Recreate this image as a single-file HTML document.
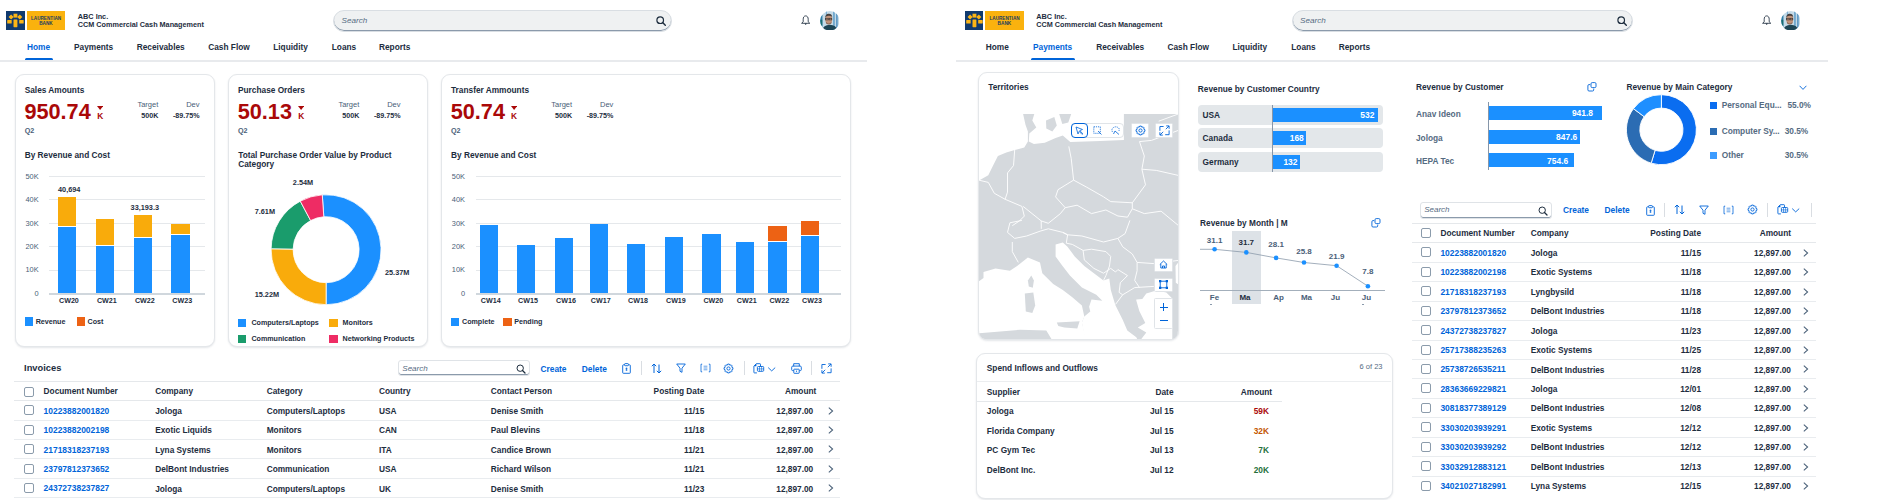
<!DOCTYPE html>
<html><head><meta charset="utf-8"><style>
html,body{margin:0;padding:0;width:1880px;height:500px;overflow:hidden;background:#fff;}
body{position:relative;font-family:"Liberation Sans", sans-serif;}
.t{position:absolute;white-space:nowrap;}
.b{position:absolute;}
</style></head><body>
<div class="b" style="left:6px;top:11.3px;width:18.9px;height:18.6px;background:#103a6e;"></div>
<div class="b" style="left:26.8px;top:11.3px;width:38.3px;height:18.6px;background:#fab20e;"></div>
<svg class="b" style="left:6px;top:11.3px" width="18.9" height="18.6" viewBox="0 0 18.9 18.6">
<g fill="#fbb516"><rect x="7.5" y="2.7" width="3.9" height="3.9"/><rect x="7.5" y="8.5" width="3.9" height="7.7" rx="0.6"/><rect x="3.3" y="4.2" width="3.6" height="3.6" transform="rotate(45 5.1 6)"/><rect x="12" y="4.2" width="3.6" height="3.6" transform="rotate(45 13.8 6)"/><rect x="1.2" y="9" width="4.5" height="3.6" rx="0.6"/><rect x="13.2" y="9" width="4.5" height="3.6" rx="0.6"/></g></svg>
<div class="t" style="top:16.56px;font-size:4.65px;line-height:4.65px;color:#203b63;font-weight:bold;left:-253.95px;width:600px;text-align:center;">LAURENTIAN</div>
<div class="t" style="top:22.02px;font-size:4.7px;line-height:4.7px;color:#203b63;font-weight:bold;left:-254.1px;width:600px;text-align:center;">BANK</div>
<div class="t" style="top:12.92px;font-size:7.3px;line-height:7.3px;color:#1d2d3e;font-weight:bold;left:77.8px;">ABC Inc.</div>
<div class="t" style="top:21.26px;font-size:7.25px;line-height:7.25px;color:#1d2d3e;font-weight:bold;left:77.8px;">CCM Commercial Cash Management</div>
<div class="b" style="left:333.1px;top:9.5px;width:339px;height:22.1px;background:#eff1f2;border:1px solid #d9dee3;box-shadow:inset 0 -1px 0 #8b9aab;border-radius:11px;box-sizing:border-box;"></div>
<div class="t" style="top:16.94px;font-size:8.1px;line-height:8.1px;color:#556b82;font-weight:normal;font-style:italic;left:341.6px;">Search</div>
<svg class="b" style="left:656.1px;top:15.6px" width="10" height="10" viewBox="0 0 10 10"><circle cx="4.2" cy="4.2" r="3.3" fill="none" stroke="#1d2d3e" stroke-width="1.2"/><path d="M6.6 6.6 L9.3 9.3" stroke="#1d2d3e" stroke-width="1.4" stroke-linecap="round"/></svg>
<svg class="b" style="left:801px;top:15.2px" width="9.4" height="10.4" viewBox="0 0 9.4 10.4"><path d="M4.7 0.9 C2.9 0.9 2.2 2.5 2.2 4.2 L2.2 6.8 L0.6 8.3 L8.8 8.3 L7.2 6.8 L7.2 4.2 C7.2 2.5 6.5 0.9 4.7 0.9 Z" fill="none" stroke="#1d2d3e" stroke-width="0.85" stroke-linejoin="round"/><path d="M3.5 8.6 L5.9 8.6 L4.7 10.1 Z" fill="#1d2d3e"/></svg>
<svg class="b" style="left:819.8px;top:10.9px" width="19.6" height="19.6" viewBox="0 0 20 20"><defs><clipPath id="av0"><circle cx="10" cy="10" r="9.9"/></clipPath></defs><g clip-path="url(#av0)"><rect width="20" height="20" fill="#c5dbe8"/><rect x="0" y="4" width="2.5" height="16" fill="#2f7fa8"/><rect x="0.5" y="9" width="1.8" height="6" fill="#1b6f70"/><rect x="13.5" y="0" width="1.5" height="20" fill="#5d9cc7"/><rect x="16.5" y="0" width="1.5" height="20" fill="#4f8fbf"/><rect x="6" y="0" width="1.2" height="6" fill="#7fb0d4"/><path d="M2 20 Q3 14.5 10 14 Q17 14.5 18 20 Z" fill="#1e4656"/><ellipse cx="8.9" cy="8.8" rx="3.5" ry="4.6" fill="#c2937a"/><path d="M5.3 7.5 Q5.2 2.8 9 2.9 Q12.6 3 12.5 7 L11.6 5.4 Q9 4.3 6.2 5.6 Z" fill="#4a423e"/><rect x="5.6" y="7.4" width="2.8" height="1.7" fill="none" stroke="#2a2a2a" stroke-width="0.6"/><rect x="9.3" y="7.4" width="2.8" height="1.7" fill="none" stroke="#2a2a2a" stroke-width="0.6"/><path d="M6 11 Q8.9 14.5 11.8 11 L11.6 12.8 Q8.9 15 6.2 12.8 Z" fill="#8a6a5a"/></g></svg>
<div class="t" style="top:42.97px;font-size:8.3px;line-height:8.3px;color:#0064d9;font-weight:bold;left:27px;">Home</div>
<div class="t" style="top:42.97px;font-size:8.3px;line-height:8.3px;color:#1d2d3e;font-weight:bold;left:74px;">Payments</div>
<div class="t" style="top:42.97px;font-size:8.3px;line-height:8.3px;color:#1d2d3e;font-weight:bold;left:136.75px;">Receivables</div>
<div class="t" style="top:42.97px;font-size:8.3px;line-height:8.3px;color:#1d2d3e;font-weight:bold;left:208.25px;">Cash Flow</div>
<div class="t" style="top:42.97px;font-size:8.3px;line-height:8.3px;color:#1d2d3e;font-weight:bold;left:273.25px;">Liquidity</div>
<div class="t" style="top:42.97px;font-size:8.3px;line-height:8.3px;color:#1d2d3e;font-weight:bold;left:331.75px;">Loans</div>
<div class="t" style="top:42.97px;font-size:8.3px;line-height:8.3px;color:#1d2d3e;font-weight:bold;left:379px;">Reports</div>
<div class="b" style="left:0px;top:59.6px;width:867px;height:2px;background:#e8eaed;"></div>
<div class="b" style="left:25.25px;top:58px;width:27.25px;height:2.4px;background:#0064d9;border-radius:1.5px 1.5px 0 0;"></div>
<div class="b" style="left:964.5px;top:11.3px;width:18.9px;height:18.6px;background:#103a6e;"></div>
<div class="b" style="left:985.3px;top:11.3px;width:38.3px;height:18.6px;background:#fab20e;"></div>
<svg class="b" style="left:964.5px;top:11.3px" width="18.9" height="18.6" viewBox="0 0 18.9 18.6">
<g fill="#fbb516"><rect x="7.5" y="2.7" width="3.9" height="3.9"/><rect x="7.5" y="8.5" width="3.9" height="7.7" rx="0.6"/><rect x="3.3" y="4.2" width="3.6" height="3.6" transform="rotate(45 5.1 6)"/><rect x="12" y="4.2" width="3.6" height="3.6" transform="rotate(45 13.8 6)"/><rect x="1.2" y="9" width="4.5" height="3.6" rx="0.6"/><rect x="13.2" y="9" width="4.5" height="3.6" rx="0.6"/></g></svg>
<div class="t" style="top:16.56px;font-size:4.65px;line-height:4.65px;color:#203b63;font-weight:bold;left:704.55px;width:600px;text-align:center;">LAURENTIAN</div>
<div class="t" style="top:22.02px;font-size:4.7px;line-height:4.7px;color:#203b63;font-weight:bold;left:704.4px;width:600px;text-align:center;">BANK</div>
<div class="t" style="top:12.92px;font-size:7.3px;line-height:7.3px;color:#1d2d3e;font-weight:bold;left:1036.3px;">ABC Inc.</div>
<div class="t" style="top:21.26px;font-size:7.25px;line-height:7.25px;color:#1d2d3e;font-weight:bold;left:1036.3px;">CCM Commercial Cash Management</div>
<div class="b" style="left:1291.6px;top:9.5px;width:341.6px;height:22.1px;background:#eff1f2;border:1px solid #d9dee3;box-shadow:inset 0 -1px 0 #8b9aab;border-radius:11px;box-sizing:border-box;"></div>
<div class="t" style="top:16.94px;font-size:8.1px;line-height:8.1px;color:#556b82;font-weight:normal;font-style:italic;left:1300.1px;">Search</div>
<svg class="b" style="left:1617.2px;top:15.6px" width="10" height="10" viewBox="0 0 10 10"><circle cx="4.2" cy="4.2" r="3.3" fill="none" stroke="#1d2d3e" stroke-width="1.2"/><path d="M6.6 6.6 L9.3 9.3" stroke="#1d2d3e" stroke-width="1.4" stroke-linecap="round"/></svg>
<svg class="b" style="left:1761.8px;top:15.2px" width="9.4" height="10.4" viewBox="0 0 9.4 10.4"><path d="M4.7 0.9 C2.9 0.9 2.2 2.5 2.2 4.2 L2.2 6.8 L0.6 8.3 L8.8 8.3 L7.2 6.8 L7.2 4.2 C7.2 2.5 6.5 0.9 4.7 0.9 Z" fill="none" stroke="#1d2d3e" stroke-width="0.85" stroke-linejoin="round"/><path d="M3.5 8.6 L5.9 8.6 L4.7 10.1 Z" fill="#1d2d3e"/></svg>
<svg class="b" style="left:1780.8px;top:10.9px" width="19.6" height="19.6" viewBox="0 0 20 20"><defs><clipPath id="av958"><circle cx="10" cy="10" r="9.9"/></clipPath></defs><g clip-path="url(#av958)"><rect width="20" height="20" fill="#c5dbe8"/><rect x="0" y="4" width="2.5" height="16" fill="#2f7fa8"/><rect x="0.5" y="9" width="1.8" height="6" fill="#1b6f70"/><rect x="13.5" y="0" width="1.5" height="20" fill="#5d9cc7"/><rect x="16.5" y="0" width="1.5" height="20" fill="#4f8fbf"/><rect x="6" y="0" width="1.2" height="6" fill="#7fb0d4"/><path d="M2 20 Q3 14.5 10 14 Q17 14.5 18 20 Z" fill="#1e4656"/><ellipse cx="8.9" cy="8.8" rx="3.5" ry="4.6" fill="#c2937a"/><path d="M5.3 7.5 Q5.2 2.8 9 2.9 Q12.6 3 12.5 7 L11.6 5.4 Q9 4.3 6.2 5.6 Z" fill="#4a423e"/><rect x="5.6" y="7.4" width="2.8" height="1.7" fill="none" stroke="#2a2a2a" stroke-width="0.6"/><rect x="9.3" y="7.4" width="2.8" height="1.7" fill="none" stroke="#2a2a2a" stroke-width="0.6"/><path d="M6 11 Q8.9 14.5 11.8 11 L11.6 12.8 Q8.9 15 6.2 12.8 Z" fill="#8a6a5a"/></g></svg>
<div class="t" style="top:42.97px;font-size:8.3px;line-height:8.3px;color:#1d2d3e;font-weight:bold;left:985.75px;">Home</div>
<div class="t" style="top:42.97px;font-size:8.3px;line-height:8.3px;color:#0064d9;font-weight:bold;left:1033px;">Payments</div>
<div class="t" style="top:42.97px;font-size:8.3px;line-height:8.3px;color:#1d2d3e;font-weight:bold;left:1096.25px;">Receivables</div>
<div class="t" style="top:42.97px;font-size:8.3px;line-height:8.3px;color:#1d2d3e;font-weight:bold;left:1167.5px;">Cash Flow</div>
<div class="t" style="top:42.97px;font-size:8.3px;line-height:8.3px;color:#1d2d3e;font-weight:bold;left:1232.5px;">Liquidity</div>
<div class="t" style="top:42.97px;font-size:8.3px;line-height:8.3px;color:#1d2d3e;font-weight:bold;left:1291.25px;">Loans</div>
<div class="t" style="top:42.97px;font-size:8.3px;line-height:8.3px;color:#1d2d3e;font-weight:bold;left:1338.75px;">Reports</div>
<div class="b" style="left:956px;top:59.6px;width:871.5px;height:2px;background:#e8eaed;"></div>
<div class="b" style="left:1030.75px;top:58px;width:44px;height:2.4px;background:#0064d9;border-radius:1.5px 1.5px 0 0;"></div>
<div class="b" style="left:14.5px;top:74.2px;width:200.3px;height:273px;background:#fff;border:1px solid #e4e7ea;border-radius:9px;box-sizing:border-box;box-shadow:0 1px 2px rgba(34,53,72,0.12);background:#fff;"></div>
<div class="b" style="left:227.6px;top:74.2px;width:200px;height:273px;background:#fff;border:1px solid #e4e7ea;border-radius:9px;box-sizing:border-box;box-shadow:0 1px 2px rgba(34,53,72,0.12);background:#fff;"></div>
<div class="b" style="left:440.5px;top:74.2px;width:410.3px;height:273px;background:#fff;border:1px solid #e4e7ea;border-radius:9px;box-sizing:border-box;box-shadow:0 1px 2px rgba(34,53,72,0.12);background:#fff;"></div>
<div class="t" style="top:85.67px;font-size:8.3px;line-height:8.3px;color:#1d2d3e;font-weight:bold;left:24.7px;">Sales Amounts</div>
<div class="t" style="top:101.33px;font-size:21.7px;line-height:21.7px;color:#aa0808;font-weight:bold;left:24.4px;">950.74</div>
<svg class="b" style="left:97.3px;top:105.6px" width="6" height="4"><path d="M0 0 L6.2 0 L3.1 4 Z" fill="#aa0808"/></svg>
<div class="t" style="top:112.49px;font-size:8.4px;line-height:8.4px;color:#aa0808;font-weight:bold;left:97.2px;">K</div>
<div class="t" style="top:101.45px;font-size:7.5px;line-height:7.5px;color:#4a6078;font-weight:normal;right:1721.7px;text-align:right;">Target</div>
<div class="t" style="top:112.55px;font-size:7.15px;line-height:7.15px;color:#1d2d3e;font-weight:bold;right:1721.7px;text-align:right;">500K</div>
<div class="t" style="top:101.45px;font-size:7.5px;line-height:7.5px;color:#4a6078;font-weight:normal;right:1680.5px;text-align:right;">Dev</div>
<div class="t" style="top:112.55px;font-size:7.15px;line-height:7.15px;color:#1d2d3e;font-weight:bold;right:1680.5px;text-align:right;">-89.75%</div>
<div class="t" style="top:127.21px;font-size:7.2px;line-height:7.2px;color:#4a6078;font-weight:bold;left:24.7px;">Q2</div>
<div class="t" style="top:85.67px;font-size:8.3px;line-height:8.3px;color:#1d2d3e;font-weight:bold;left:238px;">Purchase Orders</div>
<div class="t" style="top:101.33px;font-size:21.7px;line-height:21.7px;color:#aa0808;font-weight:bold;left:237.7px;">50.13</div>
<svg class="b" style="left:298.3px;top:105.6px" width="6" height="4"><path d="M0 0 L6.2 0 L3.1 4 Z" fill="#aa0808"/></svg>
<div class="t" style="top:112.49px;font-size:8.4px;line-height:8.4px;color:#aa0808;font-weight:bold;left:298.2px;">K</div>
<div class="t" style="top:101.45px;font-size:7.5px;line-height:7.5px;color:#4a6078;font-weight:normal;right:1520.7px;text-align:right;">Target</div>
<div class="t" style="top:112.55px;font-size:7.15px;line-height:7.15px;color:#1d2d3e;font-weight:bold;right:1520.7px;text-align:right;">500K</div>
<div class="t" style="top:101.45px;font-size:7.5px;line-height:7.5px;color:#4a6078;font-weight:normal;right:1479.5px;text-align:right;">Dev</div>
<div class="t" style="top:112.55px;font-size:7.15px;line-height:7.15px;color:#1d2d3e;font-weight:bold;right:1479.5px;text-align:right;">-89.75%</div>
<div class="t" style="top:127.21px;font-size:7.2px;line-height:7.2px;color:#4a6078;font-weight:bold;left:238px;">Q2</div>
<div class="t" style="top:85.67px;font-size:8.3px;line-height:8.3px;color:#1d2d3e;font-weight:bold;left:451px;">Transfer Ammounts</div>
<div class="t" style="top:101.33px;font-size:21.7px;line-height:21.7px;color:#aa0808;font-weight:bold;left:450.7px;">50.74</div>
<svg class="b" style="left:511.1px;top:105.6px" width="6" height="4"><path d="M0 0 L6.2 0 L3.1 4 Z" fill="#aa0808"/></svg>
<div class="t" style="top:112.49px;font-size:8.4px;line-height:8.4px;color:#aa0808;font-weight:bold;left:511px;">K</div>
<div class="t" style="top:101.45px;font-size:7.5px;line-height:7.5px;color:#4a6078;font-weight:normal;right:1307.9px;text-align:right;">Target</div>
<div class="t" style="top:112.55px;font-size:7.15px;line-height:7.15px;color:#1d2d3e;font-weight:bold;right:1307.9px;text-align:right;">500K</div>
<div class="t" style="top:101.45px;font-size:7.5px;line-height:7.5px;color:#4a6078;font-weight:normal;right:1266.7px;text-align:right;">Dev</div>
<div class="t" style="top:112.55px;font-size:7.15px;line-height:7.15px;color:#1d2d3e;font-weight:bold;right:1266.7px;text-align:right;">-89.75%</div>
<div class="t" style="top:127.21px;font-size:7.2px;line-height:7.2px;color:#4a6078;font-weight:bold;left:451px;">Q2</div>
<div class="t" style="top:150.57px;font-size:8.3px;line-height:8.3px;color:#1d2d3e;font-weight:bold;left:24.7px;">By Revenue and Cost</div>
<div class="b" style="left:49px;top:175.8px;width:155.6px;height:1px;background:#e5e8eb;"></div>
<div class="t" style="top:172.64px;font-size:7.4px;line-height:7.4px;color:#4a6078;font-weight:normal;right:1841.4px;text-align:right;">50K</div>
<div class="b" style="left:49px;top:199.3px;width:155.6px;height:1px;background:#e5e8eb;"></div>
<div class="t" style="top:196.14px;font-size:7.4px;line-height:7.4px;color:#4a6078;font-weight:normal;right:1841.4px;text-align:right;">40K</div>
<div class="b" style="left:49px;top:222.8px;width:155.6px;height:1px;background:#e5e8eb;"></div>
<div class="t" style="top:219.64px;font-size:7.4px;line-height:7.4px;color:#4a6078;font-weight:normal;right:1841.4px;text-align:right;">30K</div>
<div class="b" style="left:49px;top:246.2px;width:155.6px;height:1px;background:#e5e8eb;"></div>
<div class="t" style="top:243.04px;font-size:7.4px;line-height:7.4px;color:#4a6078;font-weight:normal;right:1841.4px;text-align:right;">20K</div>
<div class="b" style="left:49px;top:269.6px;width:155.6px;height:1px;background:#e5e8eb;"></div>
<div class="t" style="top:266.44px;font-size:7.4px;line-height:7.4px;color:#4a6078;font-weight:normal;right:1841.4px;text-align:right;">10K</div>
<div class="b" style="left:49px;top:293px;width:155.6px;height:1.6px;background:#d0d7dd;"></div>
<div class="t" style="top:289.94px;font-size:7.4px;line-height:7.4px;color:#4a6078;font-weight:normal;right:1841.4px;text-align:right;">0</div>
<div class="b" style="left:57.9px;top:197.2px;width:18.4px;height:29px;background:#f9ab0b;"></div>
<div class="b" style="left:57.9px;top:226.8px;width:18.4px;height:66.4px;background:#1b90ff;"></div>
<div class="t" style="top:298.25px;font-size:7.15px;line-height:7.15px;color:#1d2d3e;font-weight:bold;left:-231.1px;width:600px;text-align:center;">CW20</div>
<div class="b" style="left:95.8px;top:218.7px;width:18.4px;height:26.2px;background:#f9ab0b;"></div>
<div class="b" style="left:95.8px;top:245.5px;width:18.4px;height:47.7px;background:#1b90ff;"></div>
<div class="t" style="top:298.25px;font-size:7.15px;line-height:7.15px;color:#1d2d3e;font-weight:bold;left:-193.2px;width:600px;text-align:center;">CW21</div>
<div class="b" style="left:133.8px;top:215.4px;width:18.4px;height:21.8px;background:#f9ab0b;"></div>
<div class="b" style="left:133.8px;top:237.8px;width:18.4px;height:55.4px;background:#1b90ff;"></div>
<div class="t" style="top:298.25px;font-size:7.15px;line-height:7.15px;color:#1d2d3e;font-weight:bold;left:-155.2px;width:600px;text-align:center;">CW22</div>
<div class="b" style="left:171.2px;top:223.8px;width:18.4px;height:10.7px;background:#f9ab0b;"></div>
<div class="b" style="left:171.2px;top:235.1px;width:18.4px;height:58.1px;background:#1b90ff;"></div>
<div class="t" style="top:298.25px;font-size:7.15px;line-height:7.15px;color:#1d2d3e;font-weight:bold;left:-117.8px;width:600px;text-align:center;">CW23</div>
<div class="t" style="top:185.82px;font-size:7.3px;line-height:7.3px;color:#1d2d3e;font-weight:bold;left:-230.8px;width:600px;text-align:center;">40,694</div>
<div class="t" style="top:204.22px;font-size:7.3px;line-height:7.3px;color:#1d2d3e;font-weight:bold;left:-155.2px;width:600px;text-align:center;">33,193.3</div>
<div class="b" style="left:24.7px;top:317.4px;width:8.2px;height:8.4px;background:#1b90ff;"></div>
<div class="t" style="top:318.55px;font-size:7.15px;line-height:7.15px;color:#1d2d3e;font-weight:bold;left:35.7px;">Revenue</div>
<div class="b" style="left:76.8px;top:317.4px;width:8.2px;height:8.4px;background:#ed6214;"></div>
<div class="t" style="top:318.55px;font-size:7.15px;line-height:7.15px;color:#1d2d3e;font-weight:bold;left:87.6px;">Cost</div>
<div class="t" style="top:150.57px;font-size:8.3px;line-height:8.3px;color:#1d2d3e;font-weight:bold;left:451px;">By Revenue and Cost</div>
<div class="b" style="left:475.7px;top:175.8px;width:365px;height:1px;background:#e5e8eb;"></div>
<div class="t" style="top:172.64px;font-size:7.4px;line-height:7.4px;color:#4a6078;font-weight:normal;right:1415px;text-align:right;">50K</div>
<div class="b" style="left:475.7px;top:199.3px;width:365px;height:1px;background:#e5e8eb;"></div>
<div class="t" style="top:196.14px;font-size:7.4px;line-height:7.4px;color:#4a6078;font-weight:normal;right:1415px;text-align:right;">40K</div>
<div class="b" style="left:475.7px;top:222.8px;width:365px;height:1px;background:#e5e8eb;"></div>
<div class="t" style="top:219.64px;font-size:7.4px;line-height:7.4px;color:#4a6078;font-weight:normal;right:1415px;text-align:right;">30K</div>
<div class="b" style="left:475.7px;top:246.2px;width:365px;height:1px;background:#e5e8eb;"></div>
<div class="t" style="top:243.04px;font-size:7.4px;line-height:7.4px;color:#4a6078;font-weight:normal;right:1415px;text-align:right;">20K</div>
<div class="b" style="left:475.7px;top:269.6px;width:365px;height:1px;background:#e5e8eb;"></div>
<div class="t" style="top:266.44px;font-size:7.4px;line-height:7.4px;color:#4a6078;font-weight:normal;right:1415px;text-align:right;">10K</div>
<div class="b" style="left:475.7px;top:293px;width:365px;height:1.6px;background:#d0d7dd;"></div>
<div class="t" style="top:289.94px;font-size:7.4px;line-height:7.4px;color:#4a6078;font-weight:normal;right:1415px;text-align:right;">0</div>
<div class="b" style="left:479.7px;top:225.2px;width:18.4px;height:68px;background:#1b90ff;"></div>
<div class="t" style="top:298.25px;font-size:7.15px;line-height:7.15px;color:#1d2d3e;font-weight:bold;left:190.7px;width:600px;text-align:center;">CW14</div>
<div class="b" style="left:517px;top:244.8px;width:18.4px;height:48.4px;background:#1b90ff;"></div>
<div class="t" style="top:298.25px;font-size:7.15px;line-height:7.15px;color:#1d2d3e;font-weight:bold;left:228px;width:600px;text-align:center;">CW15</div>
<div class="b" style="left:555px;top:238px;width:18.4px;height:55.2px;background:#1b90ff;"></div>
<div class="t" style="top:298.25px;font-size:7.15px;line-height:7.15px;color:#1d2d3e;font-weight:bold;left:266px;width:600px;text-align:center;">CW16</div>
<div class="b" style="left:589.7px;top:223.8px;width:18.4px;height:69.4px;background:#1b90ff;"></div>
<div class="t" style="top:298.25px;font-size:7.15px;line-height:7.15px;color:#1d2d3e;font-weight:bold;left:300.7px;width:600px;text-align:center;">CW17</div>
<div class="b" style="left:627px;top:243.9px;width:18.4px;height:49.3px;background:#1b90ff;"></div>
<div class="t" style="top:298.25px;font-size:7.15px;line-height:7.15px;color:#1d2d3e;font-weight:bold;left:338px;width:600px;text-align:center;">CW18</div>
<div class="b" style="left:664.9px;top:236.8px;width:18.4px;height:56.4px;background:#1b90ff;"></div>
<div class="t" style="top:298.25px;font-size:7.15px;line-height:7.15px;color:#1d2d3e;font-weight:bold;left:375.9px;width:600px;text-align:center;">CW19</div>
<div class="b" style="left:702.3px;top:234.2px;width:18.4px;height:59px;background:#1b90ff;"></div>
<div class="t" style="top:298.25px;font-size:7.15px;line-height:7.15px;color:#1d2d3e;font-weight:bold;left:413.3px;width:600px;text-align:center;">CW20</div>
<div class="b" style="left:735.7px;top:241.5px;width:18.4px;height:51.7px;background:#1b90ff;"></div>
<div class="t" style="top:298.25px;font-size:7.15px;line-height:7.15px;color:#1d2d3e;font-weight:bold;left:446.7px;width:600px;text-align:center;">CW21</div>
<div class="b" style="left:768.3px;top:225.8px;width:18.4px;height:15.4px;background:#ed6214;"></div>
<div class="b" style="left:768.3px;top:241.8px;width:18.4px;height:51.4px;background:#1b90ff;"></div>
<div class="t" style="top:298.25px;font-size:7.15px;line-height:7.15px;color:#1d2d3e;font-weight:bold;left:479.3px;width:600px;text-align:center;">CW22</div>
<div class="b" style="left:801px;top:221px;width:18.4px;height:14.3px;background:#ed6214;"></div>
<div class="b" style="left:801px;top:235.9px;width:18.4px;height:57.3px;background:#1b90ff;"></div>
<div class="t" style="top:298.25px;font-size:7.15px;line-height:7.15px;color:#1d2d3e;font-weight:bold;left:512px;width:600px;text-align:center;">CW23</div>
<div class="b" style="left:451px;top:317.5px;width:8.4px;height:8.1px;background:#1b90ff;"></div>
<div class="t" style="top:318.55px;font-size:7.15px;line-height:7.15px;color:#1d2d3e;font-weight:bold;left:462px;">Complete</div>
<div class="b" style="left:503.2px;top:317.5px;width:8.4px;height:8.1px;background:#ed6214;"></div>
<div class="t" style="top:318.55px;font-size:7.15px;line-height:7.15px;color:#1d2d3e;font-weight:bold;left:514.2px;">Pending</div>
<div class="t" style="top:150.57px;font-size:8.3px;line-height:8.3px;color:#1d2d3e;font-weight:bold;left:238.2px;">Total Purchase Order Value by Product</div>
<div class="t" style="top:159.77px;font-size:8.3px;line-height:8.3px;color:#1d2d3e;font-weight:bold;left:238.2px;">Category</div>
<svg class="b" style="left:0;top:0" width="880" height="500"><path d="M322.26 194.83 A55 55 0 1 1 326.10 304.70 L326.10 282.70 A33 33 0 1 0 323.80 216.78 Z" fill="#1b90ff" stroke="#fff" stroke-width="0.8"/><path d="M326.10 304.70 A55 55 0 0 1 271.11 248.74 L293.11 249.12 A33 33 0 0 0 326.10 282.70 Z" fill="#f9ab0b" stroke="#fff" stroke-width="0.8"/><path d="M271.11 248.74 A55 55 0 0 1 300.28 201.14 L310.61 220.56 A33 33 0 0 0 293.11 249.12 Z" fill="#1a9c6c" stroke="#fff" stroke-width="0.8"/><path d="M300.28 201.14 A55 55 0 0 1 322.26 194.83 L323.80 216.78 A33 33 0 0 0 310.61 220.56 Z" fill="#ee2c64" stroke="#fff" stroke-width="0.8"/></svg>
<div class="t" style="top:178.82px;font-size:7.3px;line-height:7.3px;color:#1d2d3e;font-weight:bold;left:3px;width:600px;text-align:center;">2.54M</div>
<div class="t" style="top:207.82px;font-size:7.3px;line-height:7.3px;color:#1d2d3e;font-weight:bold;left:254.7px;">7.61M</div>
<div class="t" style="top:269.42px;font-size:7.3px;line-height:7.3px;color:#1d2d3e;font-weight:bold;left:385px;">25.37M</div>
<div class="t" style="top:290.52px;font-size:7.3px;line-height:7.3px;color:#1d2d3e;font-weight:bold;left:254.7px;">15.22M</div>
<div class="b" style="left:237.8px;top:319.2px;width:8.5px;height:8.1px;background:#1b90ff;"></div>
<div class="t" style="top:319.75px;font-size:7.15px;line-height:7.15px;color:#1d2d3e;font-weight:bold;left:251.4px;">Computers/Laptops</div>
<div class="b" style="left:329px;top:319.2px;width:8.5px;height:8.1px;background:#f9ab0b;"></div>
<div class="t" style="top:319.75px;font-size:7.15px;line-height:7.15px;color:#1d2d3e;font-weight:bold;left:342.6px;">Monitors</div>
<div class="b" style="left:237.8px;top:335px;width:8.5px;height:8.1px;background:#1a9c6c;"></div>
<div class="t" style="top:335.55px;font-size:7.15px;line-height:7.15px;color:#1d2d3e;font-weight:bold;left:251.4px;">Communication</div>
<div class="b" style="left:329px;top:335px;width:8.5px;height:8.1px;background:#ee2c64;"></div>
<div class="t" style="top:335.55px;font-size:7.15px;line-height:7.15px;color:#1d2d3e;font-weight:bold;left:342.6px;">Networking Products</div>
<div class="t" style="top:364.23px;font-size:9.3px;line-height:9.3px;color:#1d2d3e;font-weight:bold;left:24.1px;">Invoices</div>
<div class="b" style="left:397.7px;top:360.2px;width:132.3px;height:16.3px;background:#fff;border:1px solid #dfe3e7;border-radius:3px;box-sizing:border-box;box-shadow:inset 0 -1px 0 #8b9aab;"></div>
<div class="t" style="top:364.63px;font-size:8px;line-height:8px;color:#556b82;font-weight:normal;font-style:italic;left:402.3px;">Search</div>
<svg class="b" style="left:516px;top:363.8px" width="10" height="10" viewBox="0 0 10 10"><circle cx="4.2" cy="4.2" r="3.2" fill="none" stroke="#1d2d3e" stroke-width="1"/><path d="M6.5 6.5 L9 9" stroke="#1d2d3e" stroke-width="1.3" stroke-linecap="round"/></svg>
<div class="t" style="top:364.63px;font-size:8.35px;line-height:8.35px;color:#0064d9;font-weight:bold;left:540.5px;">Create</div>
<div class="t" style="top:364.59px;font-size:8.4px;line-height:8.4px;color:#0064d9;font-weight:bold;left:581.8px;">Delete</div>
<svg class="b" style="left:622.3px;top:363px" width="9" height="11" viewBox="0 0 9 11"><path d="M2.4 1.8 H1.4 Q0.7 1.8 0.7 2.5 V9.6 Q0.7 10.3 1.4 10.3 H7.6 Q8.3 10.3 8.3 9.6 V2.5 Q8.3 1.8 7.6 1.8 H6.6" fill="none" stroke="#0064d9" stroke-width="0.9"/><rect x="2.6" y="0.6" width="3.8" height="2.1" rx="0.6" fill="none" stroke="#0064d9" stroke-width="0.9"/><path d="M4.5 4.6 V7.8 M3.5 5.4 H5.5 M3.5 7 H5.5" stroke="#0064d9" stroke-width="0.7"/></svg>
<div class="b" style="left:641.2px;top:361.2px;width:1px;height:14px;background:#d9dde2;"></div>
<svg class="b" style="left:651.3px;top:362.8px" width="11" height="11" viewBox="0 0 11 11"><path d="M3 10 V1 M0.8 3.2 L3 1 L5.2 3.2" fill="none" stroke="#0064d9" stroke-width="1"/><path d="M8 1.5 V10 M5.8 7.8 L8 10 L10.2 7.8" fill="none" stroke="#0064d9" stroke-width="1"/></svg>
<svg class="b" style="left:675.7px;top:363.3px" width="10" height="10" viewBox="0 0 10 10"><path d="M0.7 1 H9.3 L6 5.2 V9.3 L4 8.3 V5.2 Z" fill="none" stroke="#0064d9" stroke-width="0.9" stroke-linejoin="round"/></svg>
<svg class="b" style="left:699.5px;top:363.2px" width="11" height="10" viewBox="0 0 11 10"><path d="M2.2 1.2 H1 V8.8 H2.2 M8.8 1.2 H10 V8.8 H8.8" fill="none" stroke="#0064d9" stroke-width="0.8"/><path d="M3.6 3.2 H7.4 M3.6 5 H7.4 M3.6 6.8 H7.4" stroke="#0064d9" stroke-width="0.6"/></svg>
<svg class="b" style="left:723.3px;top:362.8px" width="11" height="11" viewBox="0 0 11 11"><path d="M4.34 2.14 L4.72 1.07 L6.28 1.07 L6.66 2.14 L7.06 2.31 L8.08 1.81 L9.19 2.92 L8.69 3.94 L8.86 4.34 L9.93 4.72 L9.93 6.28 L8.86 6.66 L8.69 7.06 L9.19 8.08 L8.08 9.19 L7.06 8.69 L6.66 8.86 L6.28 9.93 L4.72 9.93 L4.34 8.86 L3.94 8.69 L2.92 9.19 L1.81 8.08 L2.31 7.06 L2.14 6.66 L1.07 6.28 L1.07 4.72 L2.14 4.34 L2.31 3.94 L1.81 2.92 L2.92 1.81 L3.94 2.31 Z" fill="none" stroke="#0064d9" stroke-width="0.9" stroke-linejoin="round"/><circle cx="5.5" cy="5.5" r="1.6" fill="none" stroke="#0064d9" stroke-width="0.9"/></svg>
<div class="b" style="left:743.8px;top:361.2px;width:1px;height:14px;background:#d9dde2;"></div>
<svg class="b" style="left:753.3px;top:362.8px" width="25" height="11" viewBox="0 0 25 11"><path d="M3.9 9.9 H1.4 Q0.9 9.9 0.9 9.4 V3.2 L3.3 0.7 H6.9 Q7.5 0.7 7.5 1.3 V3.2" fill="none" stroke="#0064d9" stroke-width="0.9" stroke-linejoin="round"/><path d="M0.9 3.3 L3.4 3.3 V0.8 Z" fill="#0064d9"/><rect x="4.4" y="3.5" width="6.3" height="4.8" rx="0.9" fill="none" stroke="#0064d9" stroke-width="0.9"/><path d="M6.5 3.6 V8.2 M8.6 3.6 V8.2 M4.5 5.9 H10.6" stroke="#0064d9" stroke-width="0.6"/><path d="M15.2 4.6 L18.7 7.9 L22.2 4.6" fill="none" stroke="#0064d9" stroke-width="0.9"/></svg>
<svg class="b" style="left:790.8px;top:362.8px" width="11" height="11" viewBox="0 0 11 11"><path d="M2.7 3.2 V0.7 H8.3 V3.2" fill="none" stroke="#0064d9" stroke-width="0.9"/><path d="M2.6 7.6 H1.6 Q0.7 7.6 0.7 6.7 V4.2 Q0.7 3.1 1.8 3.1 H9.2 Q10.3 3.1 10.3 4.2 V6.7 Q10.3 7.6 9.4 7.6 H8.4" fill="none" stroke="#0064d9" stroke-width="0.9"/><rect x="2.8" y="6.2" width="5.4" height="4.1" rx="0.5" fill="none" stroke="#0064d9" stroke-width="0.9"/><circle cx="5.5" cy="8.2" r="0.6" fill="#0064d9"/></svg>
<div class="b" style="left:811.3px;top:361.2px;width:1px;height:14px;background:#d9dde2;"></div>
<svg class="b" style="left:820.5px;top:362.8px" width="11" height="11" viewBox="0 0 11 11"><path d="M0.9 5.8 V1.5 H4.6 M10.1 5.4 V9.7 H6.2 M6.8 4.2 L10 1 M7.2 0.9 H10.1 V3.8 M4.2 6.8 L1 10 M0.9 7.2 V10.1 H3.8" fill="none" stroke="#0064d9" stroke-width="0.9"/></svg>
<div class="b" style="left:14.4px;top:381px;width:825.9px;height:1px;background:#e5e8eb;"></div>
<div class="b" style="left:14.4px;top:400px;width:825.9px;height:1px;background:#e5e8eb;"></div>
<div class="b" style="left:24.1px;top:386.5px;width:10px;height:10px;background:#fff;border:1px solid #8b9bab;border-radius:2px;box-sizing:border-box;"></div>
<div class="t" style="top:387.47px;font-size:8.3px;line-height:8.3px;color:#1d2d3e;font-weight:bold;left:43.6px;">Document Number</div>
<div class="t" style="top:387.47px;font-size:8.3px;line-height:8.3px;color:#1d2d3e;font-weight:bold;left:155.2px;">Company</div>
<div class="t" style="top:387.47px;font-size:8.3px;line-height:8.3px;color:#1d2d3e;font-weight:bold;left:266.7px;">Category</div>
<div class="t" style="top:387.47px;font-size:8.3px;line-height:8.3px;color:#1d2d3e;font-weight:bold;left:378.9px;">Country</div>
<div class="t" style="top:387.47px;font-size:8.3px;line-height:8.3px;color:#1d2d3e;font-weight:bold;left:490.8px;">Contact Person</div>
<div class="t" style="top:387.47px;font-size:8.3px;line-height:8.3px;color:#1d2d3e;font-weight:bold;right:1175.7px;text-align:right;">Posting Date</div>
<div class="t" style="top:387.47px;font-size:8.3px;line-height:8.3px;color:#1d2d3e;font-weight:bold;right:1063.7px;text-align:right;">Amount</div>
<div class="b" style="left:24.1px;top:405.3px;width:10px;height:10px;background:#fff;border:1px solid #8b9bab;border-radius:2px;box-sizing:border-box;"></div>
<div class="t" style="top:406.75px;font-size:8.45px;line-height:8.45px;color:#0064d9;font-weight:bold;left:43.6px;">10223882001820</div>
<div class="t" style="top:406.87px;font-size:8.3px;line-height:8.3px;color:#1d2d3e;font-weight:bold;left:155.2px;">Jologa</div>
<div class="t" style="top:406.87px;font-size:8.3px;line-height:8.3px;color:#1d2d3e;font-weight:bold;left:266.7px;">Computers/Laptops</div>
<div class="t" style="top:406.87px;font-size:8.3px;line-height:8.3px;color:#1d2d3e;font-weight:bold;left:378.9px;">USA</div>
<div class="t" style="top:406.87px;font-size:8.3px;line-height:8.3px;color:#1d2d3e;font-weight:bold;left:490.8px;">Denise Smith</div>
<div class="t" style="top:406.87px;font-size:8.3px;line-height:8.3px;color:#1d2d3e;font-weight:bold;right:1175.7px;text-align:right;">11/15</div>
<div class="t" style="top:406.87px;font-size:8.3px;line-height:8.3px;color:#1d2d3e;font-weight:bold;right:1066.8px;text-align:right;">12,897.00</div>
<svg class="b" style="left:827.6px;top:406.6px" width="6" height="8" viewBox="0 0 6 8"><path d="M0.8 0.6 L4.6 4 L0.8 7.4" fill="none" stroke="#4a6078" stroke-width="1.05"/></svg>
<div class="b" style="left:14.4px;top:419.5px;width:825.9px;height:1px;background:#e9ecef;"></div>
<div class="b" style="left:24.1px;top:424.72px;width:10px;height:10px;background:#fff;border:1px solid #8b9bab;border-radius:2px;box-sizing:border-box;"></div>
<div class="t" style="top:426.17px;font-size:8.45px;line-height:8.45px;color:#0064d9;font-weight:bold;left:43.6px;">10223882002198</div>
<div class="t" style="top:426.29px;font-size:8.3px;line-height:8.3px;color:#1d2d3e;font-weight:bold;left:155.2px;">Exotic Liquids</div>
<div class="t" style="top:426.29px;font-size:8.3px;line-height:8.3px;color:#1d2d3e;font-weight:bold;left:266.7px;">Monitors</div>
<div class="t" style="top:426.29px;font-size:8.3px;line-height:8.3px;color:#1d2d3e;font-weight:bold;left:378.9px;">CAN</div>
<div class="t" style="top:426.29px;font-size:8.3px;line-height:8.3px;color:#1d2d3e;font-weight:bold;left:490.8px;">Paul Blevins</div>
<div class="t" style="top:426.29px;font-size:8.3px;line-height:8.3px;color:#1d2d3e;font-weight:bold;right:1175.7px;text-align:right;">11/18</div>
<div class="t" style="top:426.29px;font-size:8.3px;line-height:8.3px;color:#1d2d3e;font-weight:bold;right:1066.8px;text-align:right;">12,897.00</div>
<svg class="b" style="left:827.6px;top:426.02px" width="6" height="8" viewBox="0 0 6 8"><path d="M0.8 0.6 L4.6 4 L0.8 7.4" fill="none" stroke="#4a6078" stroke-width="1.05"/></svg>
<div class="b" style="left:14.4px;top:438.92px;width:825.9px;height:1px;background:#e9ecef;"></div>
<div class="b" style="left:24.1px;top:444.14px;width:10px;height:10px;background:#fff;border:1px solid #8b9bab;border-radius:2px;box-sizing:border-box;"></div>
<div class="t" style="top:445.59px;font-size:8.45px;line-height:8.45px;color:#0064d9;font-weight:bold;left:43.6px;">21718318237193</div>
<div class="t" style="top:445.71px;font-size:8.3px;line-height:8.3px;color:#1d2d3e;font-weight:bold;left:155.2px;">Lyna Systems</div>
<div class="t" style="top:445.71px;font-size:8.3px;line-height:8.3px;color:#1d2d3e;font-weight:bold;left:266.7px;">Monitors</div>
<div class="t" style="top:445.71px;font-size:8.3px;line-height:8.3px;color:#1d2d3e;font-weight:bold;left:378.9px;">ITA</div>
<div class="t" style="top:445.71px;font-size:8.3px;line-height:8.3px;color:#1d2d3e;font-weight:bold;left:490.8px;">Candice Brown</div>
<div class="t" style="top:445.71px;font-size:8.3px;line-height:8.3px;color:#1d2d3e;font-weight:bold;right:1175.7px;text-align:right;">11/21</div>
<div class="t" style="top:445.71px;font-size:8.3px;line-height:8.3px;color:#1d2d3e;font-weight:bold;right:1066.8px;text-align:right;">12,897.00</div>
<svg class="b" style="left:827.6px;top:445.44px" width="6" height="8" viewBox="0 0 6 8"><path d="M0.8 0.6 L4.6 4 L0.8 7.4" fill="none" stroke="#4a6078" stroke-width="1.05"/></svg>
<div class="b" style="left:14.4px;top:458.34px;width:825.9px;height:1px;background:#e9ecef;"></div>
<div class="b" style="left:24.1px;top:463.56px;width:10px;height:10px;background:#fff;border:1px solid #8b9bab;border-radius:2px;box-sizing:border-box;"></div>
<div class="t" style="top:465.01px;font-size:8.45px;line-height:8.45px;color:#0064d9;font-weight:bold;left:43.6px;">23797812373652</div>
<div class="t" style="top:465.13px;font-size:8.3px;line-height:8.3px;color:#1d2d3e;font-weight:bold;left:155.2px;">DelBont Industries</div>
<div class="t" style="top:465.13px;font-size:8.3px;line-height:8.3px;color:#1d2d3e;font-weight:bold;left:266.7px;">Communication</div>
<div class="t" style="top:465.13px;font-size:8.3px;line-height:8.3px;color:#1d2d3e;font-weight:bold;left:378.9px;">USA</div>
<div class="t" style="top:465.13px;font-size:8.3px;line-height:8.3px;color:#1d2d3e;font-weight:bold;left:490.8px;">Richard Wilson</div>
<div class="t" style="top:465.13px;font-size:8.3px;line-height:8.3px;color:#1d2d3e;font-weight:bold;right:1175.7px;text-align:right;">11/21</div>
<div class="t" style="top:465.13px;font-size:8.3px;line-height:8.3px;color:#1d2d3e;font-weight:bold;right:1066.8px;text-align:right;">12,897.00</div>
<svg class="b" style="left:827.6px;top:464.86px" width="6" height="8" viewBox="0 0 6 8"><path d="M0.8 0.6 L4.6 4 L0.8 7.4" fill="none" stroke="#4a6078" stroke-width="1.05"/></svg>
<div class="b" style="left:14.4px;top:477.76px;width:825.9px;height:1px;background:#e9ecef;"></div>
<div class="b" style="left:24.1px;top:482.98px;width:10px;height:10px;background:#fff;border:1px solid #8b9bab;border-radius:2px;box-sizing:border-box;"></div>
<div class="t" style="top:484.43px;font-size:8.45px;line-height:8.45px;color:#0064d9;font-weight:bold;left:43.6px;">24372738237827</div>
<div class="t" style="top:484.55px;font-size:8.3px;line-height:8.3px;color:#1d2d3e;font-weight:bold;left:155.2px;">Jologa</div>
<div class="t" style="top:484.55px;font-size:8.3px;line-height:8.3px;color:#1d2d3e;font-weight:bold;left:266.7px;">Computers/Laptops</div>
<div class="t" style="top:484.55px;font-size:8.3px;line-height:8.3px;color:#1d2d3e;font-weight:bold;left:378.9px;">UK</div>
<div class="t" style="top:484.55px;font-size:8.3px;line-height:8.3px;color:#1d2d3e;font-weight:bold;left:490.8px;">Denise Smith</div>
<div class="t" style="top:484.55px;font-size:8.3px;line-height:8.3px;color:#1d2d3e;font-weight:bold;right:1175.7px;text-align:right;">11/23</div>
<div class="t" style="top:484.55px;font-size:8.3px;line-height:8.3px;color:#1d2d3e;font-weight:bold;right:1066.8px;text-align:right;">12,897.00</div>
<svg class="b" style="left:827.6px;top:484.28px" width="6" height="8" viewBox="0 0 6 8"><path d="M0.8 0.6 L4.6 4 L0.8 7.4" fill="none" stroke="#4a6078" stroke-width="1.05"/></svg>
<div class="b" style="left:14.4px;top:497.18px;width:825.9px;height:1px;background:#e9ecef;"></div>
<div class="b" style="left:977.7px;top:72px;width:201px;height:268px;background:#fff;border:1px solid #e4e7ea;border-radius:9px;box-sizing:border-box;box-shadow:0 1px 2px rgba(34,53,72,0.12);background:#fff;"></div>
<div class="t" style="top:83.17px;font-size:8.3px;line-height:8.3px;color:#1d2d3e;font-weight:bold;left:988.2px;">Territories</div>
<svg class="b" style="left:978.7px;top:113.6px" width="199" height="225.4" viewBox="978.7 113.6 199 225.4">
<defs><clipPath id="mc"><path d="M978.7 113.6 H1177.7 V330 Q1177.7 339 1168.7 339 H987.7 Q978.7 339 978.7 330 Z"/></clipPath></defs>
<g clip-path="url(#mc)"><rect x="978" y="113" width="200" height="227" fill="#d5d9dd"/><path d="M976.0 113.6 L1022.8 113.6 L1025.2 124.4 L1027.6 131.0 L1027.6 141.2 L1024.0 147.2 L1014.4 149.6 L1006.0 152.0 L997.6 155.6 L992.8 165.2 L988.0 174.9 L979.6 179.7 L976.0 180.0 Z" fill="#fff"/><path d="M1034.0 113.6 L1123.6 113.6 L1123.6 139.5 L1100.0 140.5 L1070.0 141.5 L1062.5 135.2 L1055.3 137.6 L1044.5 142.4 L1033.6 143.6 L1028.5 141.2 L1029.0 133.0 L1036.0 127.0 L1032.0 120.0 Z" fill="#fff"/><path d="M976.0 283.0 L983.2 277.6 L983.2 271.6 L995.2 268.0 L1009.6 270.4 L1016.8 265.6 L1027.6 257.2 L1039.7 262.0 L1042.0 272.8 L1052.9 283.7 L1062.5 289.7 L1072.0 296.9 L1081.6 305.0 L1084.0 316.0 L1081.6 322.0 L1086.0 340.0 L976.0 340.0 Z" fill="#fff"/><path d="M1055.3 244.0 L1062.5 242.1 L1067.2 246.4 L1074.4 256.0 L1084.0 265.6 L1093.6 272.8 L1103.2 280.0 L1109.0 278.0 L1110.5 289.5 L1115.0 304.5 L1122.5 319.5 L1127.0 330.0 L1136.0 336.8 L1137.5 340.0 L1085.0 340.0 L1081.6 322.0 L1084.0 316.0 L1090.0 311.2 L1088.8 306.4 L1091.2 299.2 L1102.0 300.4 L1096.0 294.4 L1081.6 287.2 L1069.6 275.2 L1061.3 264.4 L1055.3 256.0 Z" fill="#fff"/><path d="M1136.0 299.0 L1142.0 298.5 L1146.0 293.0 L1156.0 290.0 L1166.0 292.0 L1172.0 298.0 L1172.0 340.0 L1140.0 340.0 L1146.0 332.0 L1137.5 327.0 L1145.0 322.5 L1139.0 310.5 L1136.0 300.0 Z" fill="#fff"/><path d="M1175.2 265.6 L1178.0 262.0 L1178.0 284.0 L1175.5 282.4 Z" fill="#fff"/><path d="M1045.7 120.0 L1054.0 116.5 L1056.5 125.0 L1052.0 131.0 L1046.0 128.0 Z" fill="#d5d9dd"/><path d="M1058.9 113.6 L1070.9 113.6 L1068.0 122.0 L1062.0 123.5 Z" fill="#d5d9dd"/><path d="M1027.6 280.0 L1031.0 275.2 L1033.6 280.0 L1032.5 287.3 L1028.5 286.0 Z" fill="#d5d9dd"/><path d="M1024.5 293.0 L1033.0 292.0 L1034.9 305.0 L1032.0 312.5 L1025.5 311.0 Z" fill="#d5d9dd"/><path d="M1056.5 322.0 L1079.3 320.8 L1077.0 328.0 L1064.0 327.0 L1058.0 325.5 Z" fill="#d5d9dd"/><path d="M976.0 333.0 L1000.0 331.0 L1020.0 329.3 L1046.0 330.0 L1052.0 340.0 L976.0 340.0 Z" fill="#d5d9dd"/><path d="M978.4 179.7 L988.0 182.0 L994.0 192.9 L1004.8 198.9 L1021.6 206.0 L1024.0 215.7 L1019.2 220.5 L1012.0 225.3" fill="none" stroke="#fff" stroke-width="0.9" stroke-linejoin="round"/><path d="M1014.4 149.6 L1013.2 165.2 L1007.2 172.5 L1007.2 191.7 L1004.8 198.9" fill="none" stroke="#fff" stroke-width="0.9" stroke-linejoin="round"/><path d="M1068.5 146.0 L1070.9 158.0 L1073.3 179.7 L1057.7 189.3 L1055.3 196.5 L1064.9 207.3" fill="none" stroke="#fff" stroke-width="0.9" stroke-linejoin="round"/><path d="M1022.8 206.0 L1040.9 220.5 L1048.0 222.9 L1060.0 213.3 L1064.9 207.3 L1076.8 204.8 L1091.2 213.2 L1105.6 209.6 L1117.6 215.6 L1127.2 216.8 L1132.0 208.4 L1132.0 202.4" fill="none" stroke="#fff" stroke-width="0.9" stroke-linejoin="round"/><path d="M1073.3 179.7 L1086.4 186.8 L1103.2 196.4 L1110.4 201.2 L1132.0 202.4" fill="none" stroke="#fff" stroke-width="0.9" stroke-linejoin="round"/><path d="M1139.2 141.2 L1144.0 155.6 L1141.6 168.8 L1145.2 184.4 L1132.0 202.4" fill="none" stroke="#fff" stroke-width="0.9" stroke-linejoin="round"/><path d="M1141.6 168.8 L1156.0 170.0 L1178.0 175.0" fill="none" stroke="#fff" stroke-width="0.9" stroke-linejoin="round"/><path d="M1139.2 141.2 L1151.2 140.0 L1178.0 130.0" fill="none" stroke="#fff" stroke-width="0.9" stroke-linejoin="round"/><path d="M1132.0 208.4 L1144.0 213.2 L1160.8 210.8 L1178.0 225.0" fill="none" stroke="#fff" stroke-width="0.9" stroke-linejoin="round"/><path d="M1158.4 120.8 L1178.0 113.6" fill="none" stroke="#fff" stroke-width="0.9" stroke-linejoin="round"/><path d="M1007.2 232.0 L1014.4 238.0 L1026.4 235.6 L1039.7 230.8 L1048.0 228.4 L1062.5 232.0 L1067.2 234.4 L1081.6 235.6 L1103.2 241.6 L1117.6 238.0 L1124.8 233.2 L1129.6 220.0" fill="none" stroke="#fff" stroke-width="0.9" stroke-linejoin="round"/><path d="M1012.0 241.6 L1012.0 251.2 L1018.0 262.0" fill="none" stroke="#fff" stroke-width="0.9" stroke-linejoin="round"/><path d="M1007.2 232.0 L1009.6 222.4 L1021.6 220.0" fill="none" stroke="#fff" stroke-width="0.9" stroke-linejoin="round"/><path d="M1062.5 232.0 L1067.3 234.4 L1066.0 242.8 L1072.0 244.0 L1082.8 250.0 L1091.2 248.8 L1105.6 251.2 L1110.4 256.0 L1109.2 265.6 L1105.6 275.2 L1103.2 280.0" fill="none" stroke="#fff" stroke-width="0.9" stroke-linejoin="round"/><path d="M1082.8 250.0 L1084.0 259.6 L1093.6 268.0 L1103.2 272.8" fill="none" stroke="#fff" stroke-width="0.9" stroke-linejoin="round"/><path d="M1117.6 238.0 L1122.4 246.4 L1132.0 253.6 L1136.8 262.0 L1153.6 263.2 L1178.0 260.0" fill="none" stroke="#fff" stroke-width="0.9" stroke-linejoin="round"/><path d="M1136.8 262.0 L1136.8 270.4 L1134.4 280.0 L1139.2 287.2" fill="none" stroke="#fff" stroke-width="0.9" stroke-linejoin="round"/><path d="M1103.2 272.8 L1110.4 268.0 L1115.2 271.6 L1117.6 269.2 L1127.2 275.2 L1120.0 282.4 L1118.8 292.0 L1122.4 294.4 L1134.4 287.2 L1153.6 286.0" fill="none" stroke="#fff" stroke-width="0.9" stroke-linejoin="round"/><path d="M1115.2 304.0 L1122.4 294.4" fill="none" stroke="#fff" stroke-width="0.9" stroke-linejoin="round"/><path d="M1040.9 220.5 L1041.0 228.4" fill="none" stroke="#fff" stroke-width="0.9" stroke-linejoin="round"/></g></svg>
<div class="b" style="left:1070.5px;top:123.4px;width:53.2px;height:15px;background:#fff;border:1px solid #e0e4e8;border-radius:4px;box-sizing:border-box;"></div>
<div class="b" style="left:1070.5px;top:123.4px;width:17.5px;height:15px;background:#fff;border:1px solid #0064d9;border-radius:4px;box-sizing:border-box;"></div>
<svg class="b" style="left:1074.5px;top:126.4px" width="9" height="9" viewBox="0 0 9 9"><path d="M1 1 L7.5 3.5 L4.8 4.6 L7.8 7.8 L7 8.4 L4.2 5.3 L3 8 Z" fill="none" stroke="#0064d9" stroke-width="0.8" stroke-linejoin="round"/></svg>
<svg class="b" style="left:1092.5px;top:126.4px" width="9" height="9" viewBox="0 0 9 9"><rect x="0.8" y="0.8" width="6.5" height="6.5" fill="none" stroke="#0064d9" stroke-width="0.8" stroke-dasharray="1.2 0.9"/><path d="M5 5 L8.5 8.5" stroke="#0064d9" stroke-width="0.8"/></svg>
<svg class="b" style="left:1110.5px;top:126.4px" width="9" height="9" viewBox="0 0 9 9"><path d="M1.5 6 Q0 3 2.5 1.5 Q5 0 7.5 1.8 Q8.8 3.5 7.8 5" fill="none" stroke="#0064d9" stroke-width="0.8" stroke-dasharray="1.2 0.9"/><path d="M4 5 L8 8.5 M2.5 8 L4 5" stroke="#0064d9" stroke-width="0.8"/></svg>
<div class="b" style="left:1130.6px;top:123.4px;width:18.6px;height:15px;background:#fff;border:1px solid #e0e4e8;border-radius:1.5px;box-sizing:border-box;"></div>
<svg class="b" style="left:1134.5px;top:125.4px" width="11" height="11" viewBox="0 0 11 11"><path d="M4.34 2.14 L4.72 1.07 L6.28 1.07 L6.66 2.14 L7.06 2.31 L8.08 1.81 L9.19 2.92 L8.69 3.94 L8.86 4.34 L9.93 4.72 L9.93 6.28 L8.86 6.66 L8.69 7.06 L9.19 8.08 L8.08 9.19 L7.06 8.69 L6.66 8.86 L6.28 9.93 L4.72 9.93 L4.34 8.86 L3.94 8.69 L2.92 9.19 L1.81 8.08 L2.31 7.06 L2.14 6.66 L1.07 6.28 L1.07 4.72 L2.14 4.34 L2.31 3.94 L1.81 2.92 L2.92 1.81 L3.94 2.31 Z" fill="none" stroke="#0064d9" stroke-width="0.9" stroke-linejoin="round"/><circle cx="5.5" cy="5.5" r="1.6" fill="none" stroke="#0064d9" stroke-width="0.9"/></svg>
<div class="b" style="left:1154.6px;top:123.4px;width:18.6px;height:15px;background:#fff;border:1px solid #e0e4e8;border-radius:1.5px;box-sizing:border-box;"></div>
<svg class="b" style="left:1158.5px;top:125.4px" width="11" height="11" viewBox="0 0 11 11"><path d="M0.9 5.8 V1.5 H4.6 M10.1 5.4 V9.7 H6.2 M6.8 4.2 L10 1 M7.2 0.9 H10.1 V3.8 M4.2 6.8 L1 10 M0.9 7.2 V10.1 H3.8" fill="none" stroke="#0064d9" stroke-width="0.9"/></svg>
<div class="b" style="left:1154.3px;top:257.6px;width:19.2px;height:14.4px;background:#fff;border:1px solid #e0e4e8;border-radius:1.5px;box-sizing:border-box;"></div>
<svg class="b" style="left:1159.4px;top:260.3px" width="9" height="9" viewBox="0 0 9 9"><path d="M0.8 4.5 L4.5 1 L8.2 4.5 M1.8 4 V8 H7.2 V4 M3.5 8 V6 H5.5 V8" fill="none" stroke="#0064d9" stroke-width="0.9"/></svg>
<div class="b" style="left:1154.3px;top:277.5px;width:19.2px;height:14.9px;background:#fff;border:1px solid #e0e4e8;border-radius:1.5px;box-sizing:border-box;"></div>
<svg class="b" style="left:1159.4px;top:280.4px" width="9" height="9" viewBox="0 0 9 9"><rect x="1.2" y="1.2" width="6.6" height="6.6" fill="none" stroke="#0064d9" stroke-width="0.9"/><g fill="#0064d9"><rect x="0" y="0" width="2.3" height="2.3"/><rect x="6.7" y="0" width="2.3" height="2.3"/><rect x="0" y="6.7" width="2.3" height="2.3"/><rect x="6.7" y="6.7" width="2.3" height="2.3"/></g></svg>
<div class="b" style="left:1154.3px;top:298.4px;width:19.2px;height:30.4px;background:#fff;border:1px solid #e0e4e8;border-radius:1.5px;box-sizing:border-box;"></div>
<div class="b" style="left:1159.7px;top:306.6px;width:8.4px;height:1.2px;background:#0064d9;"></div>
<div class="b" style="left:1163.3px;top:303px;width:1.2px;height:8.4px;background:#0064d9;"></div>
<div class="b" style="left:1159.7px;top:320.2px;width:8.4px;height:1.2px;background:#0064d9;"></div>
<div class="t" style="top:85.37px;font-size:8.3px;line-height:8.3px;color:#1d2d3e;font-weight:bold;left:1197.8px;">Revenue by Customer Country</div>
<div class="b" style="left:1197.8px;top:105px;width:185px;height:20.4px;background:#e3e7ea;border-radius:4px;"></div>
<div class="b" style="left:1272.8px;top:108.2px;width:105.2px;height:14.3px;background:#1b90ff;"></div>
<div class="t" style="top:111.47px;font-size:8.3px;line-height:8.3px;color:#1d2d3e;font-weight:bold;left:1202.6px;">USA</div>
<div class="t" style="top:111.35px;font-size:8.45px;line-height:8.45px;color:#fff;font-weight:bold;right:505.6px;text-align:right;">532</div>
<div class="b" style="left:1197.8px;top:127.9px;width:185px;height:20px;background:#e3e7ea;border-radius:4px;"></div>
<div class="b" style="left:1272.8px;top:131.3px;width:33.7px;height:14px;background:#1b90ff;"></div>
<div class="t" style="top:134.27px;font-size:8.3px;line-height:8.3px;color:#1d2d3e;font-weight:bold;left:1202.6px;">Canada</div>
<div class="t" style="top:134.15px;font-size:8.45px;line-height:8.45px;color:#fff;font-weight:bold;right:576.2px;text-align:right;">168</div>
<div class="b" style="left:1197.8px;top:152px;width:185px;height:20.2px;background:#e3e7ea;border-radius:4px;"></div>
<div class="b" style="left:1272.8px;top:154.8px;width:27.4px;height:14.5px;background:#1b90ff;"></div>
<div class="t" style="top:157.97px;font-size:8.3px;line-height:8.3px;color:#1d2d3e;font-weight:bold;left:1202.6px;">Germany</div>
<div class="t" style="top:157.85px;font-size:8.45px;line-height:8.45px;color:#fff;font-weight:bold;right:582.5px;text-align:right;">132</div>
<div class="b" style="left:1271.8px;top:105px;width:1px;height:67.2px;background:#8696a9;"></div>
<div class="t" style="top:219.17px;font-size:8.3px;line-height:8.3px;color:#1d2d3e;font-weight:bold;left:1200.1px;">Revenue by Month | M</div>
<svg class="b" style="left:1370.8px;top:217.6px" width="10" height="10" viewBox="0 0 10 10"><rect x="4" y="0.6" width="5" height="5" rx="1.2" fill="none" stroke="#0064d9" stroke-width="0.9"/><path d="M3.2 2.6 H2 Q0.9 2.6 0.9 3.7 V7.9 Q0.9 9 2 9 H5.6 Q6.7 9 6.7 7.9 V6.6" fill="none" stroke="#0064d9" stroke-width="0.9"/></svg>
<div class="b" style="left:1232px;top:230.6px;width:29px;height:73.5px;background:#dde2e7;"></div>
<div class="b" style="left:1200px;top:289.8px;width:185px;height:1.2px;background:#a3afbb;"></div>
<svg class="b" style="left:0;top:0" width="1880" height="500"><path d="M1200 249.3 L1214.6 249.3 L1246.3 252.4 L1276.1 257.9 L1304.0 262.5 L1336.6 265.7 L1367.9 286.2" fill="none" stroke="#8b9aab" stroke-width="0.8"/><circle cx="1214.6" cy="249.3" r="2.3" fill="#1b90ff"/><circle cx="1246.3" cy="252.4" r="2.3" fill="#1b90ff"/><circle cx="1276.1" cy="257.9" r="2.3" fill="#1b90ff"/><circle cx="1304" cy="262.5" r="2.3" fill="#1b90ff"/><circle cx="1336.6" cy="265.7" r="2.3" fill="#1b90ff"/><circle cx="1367.9" cy="286.2" r="2.3" fill="#1b90ff"/></svg>
<div class="t" style="top:237.03px;font-size:8px;line-height:8px;color:#4a6078;font-weight:bold;left:914.6px;width:600px;text-align:center;">31.1</div>
<div class="t" style="top:239.03px;font-size:8px;line-height:8px;color:#1d2d3e;font-weight:bold;left:946.3px;width:600px;text-align:center;">31.7</div>
<div class="t" style="top:241.13px;font-size:8px;line-height:8px;color:#4a6078;font-weight:bold;left:976.1px;width:600px;text-align:center;">28.1</div>
<div class="t" style="top:248.03px;font-size:8px;line-height:8px;color:#4a6078;font-weight:bold;left:1004px;width:600px;text-align:center;">25.8</div>
<div class="t" style="top:253.33px;font-size:8px;line-height:8px;color:#4a6078;font-weight:bold;left:1036.6px;width:600px;text-align:center;">21.9</div>
<div class="t" style="top:267.93px;font-size:8px;line-height:8px;color:#4a6078;font-weight:bold;left:1067.9px;width:600px;text-align:center;">7.8</div>
<div class="t" style="top:293.73px;font-size:8px;line-height:8px;color:#4a6078;font-weight:bold;left:914.5px;width:600px;text-align:center;">Fe</div>
<div class="t" style="top:293.73px;font-size:8px;line-height:8px;color:#1d2d3e;font-weight:bold;left:945px;width:600px;text-align:center;">Ma</div>
<div class="t" style="top:293.73px;font-size:8px;line-height:8px;color:#4a6078;font-weight:bold;left:978.5px;width:600px;text-align:center;">Ap</div>
<div class="t" style="top:293.73px;font-size:8px;line-height:8px;color:#4a6078;font-weight:bold;left:1006.5px;width:600px;text-align:center;">Ma</div>
<div class="t" style="top:293.73px;font-size:8px;line-height:8px;color:#4a6078;font-weight:bold;left:1035.5px;width:600px;text-align:center;">Ju</div>
<div class="t" style="top:293.73px;font-size:8px;line-height:8px;color:#4a6078;font-weight:bold;left:1066.5px;width:600px;text-align:center;">Ju</div>
<div class="b" style="left:1209.8px;top:303.8px;width:2px;height:1.2px;background:#8a9aab;"></div>
<div class="b" style="left:1362px;top:303.8px;width:2px;height:1.2px;background:#8a9aab;"></div>
<div class="t" style="top:82.77px;font-size:8.3px;line-height:8.3px;color:#1d2d3e;font-weight:bold;left:1416px;">Revenue by Customer</div>
<svg class="b" style="left:1587.3px;top:82px" width="10" height="10" viewBox="0 0 10 10"><rect x="4" y="0.6" width="5" height="5" rx="1.2" fill="none" stroke="#0064d9" stroke-width="0.9"/><path d="M3.2 2.6 H2 Q0.9 2.6 0.9 3.7 V7.9 Q0.9 9 2 9 H5.6 Q6.7 9 6.7 7.9 V6.6" fill="none" stroke="#0064d9" stroke-width="0.9"/></svg>
<div class="b" style="left:1488.1px;top:101.9px;width:1px;height:68.1px;background:#8696a9;"></div>
<div class="b" style="left:1489.1px;top:105.8px;width:112.7px;height:14.1px;background:#1b90ff;"></div>
<div class="t" style="top:109.57px;font-size:8.3px;line-height:8.3px;color:#556b82;font-weight:bold;left:1416px;">Anav Ideon</div>
<div class="t" style="top:109.45px;font-size:8.45px;line-height:8.45px;color:#fff;font-weight:bold;right:287px;text-align:right;">941.8</div>
<div class="b" style="left:1489.1px;top:129.8px;width:91.1px;height:14.3px;background:#1b90ff;"></div>
<div class="t" style="top:133.57px;font-size:8.3px;line-height:8.3px;color:#556b82;font-weight:bold;left:1416px;">Jologa</div>
<div class="t" style="top:133.45px;font-size:8.45px;line-height:8.45px;color:#fff;font-weight:bold;right:302.8px;text-align:right;">847.6</div>
<div class="b" style="left:1489.1px;top:153.1px;width:84.8px;height:14.1px;background:#1b90ff;"></div>
<div class="t" style="top:156.77px;font-size:8.3px;line-height:8.3px;color:#556b82;font-weight:bold;left:1416px;">HEPA Tec</div>
<div class="t" style="top:156.65px;font-size:8.45px;line-height:8.45px;color:#fff;font-weight:bold;right:311.8px;text-align:right;">754.6</div>
<div class="t" style="top:82.77px;font-size:8.3px;line-height:8.3px;color:#1d2d3e;font-weight:bold;left:1626.4px;">Revenue by Main Category</div>
<svg class="b" style="left:1798.5px;top:84.5px" width="8" height="6" viewBox="0 0 8 6"><path d="M0.6 0.8 L4 4.4 L7.4 0.8" fill="none" stroke="#0064d9" stroke-width="0.9"/></svg>
<svg class="b" style="left:0;top:0" width="1880" height="500"><path d="M1661.40 94.70 A35 35 0 1 1 1651.17 163.17 L1655.08 150.36 A21.6 21.6 0 1 0 1661.40 108.10 Z" fill="#0a6df0" stroke="#fff" stroke-width="0.9"/><path d="M1651.17 163.17 A35 35 0 0 1 1633.45 108.64 L1644.15 116.70 A21.6 21.6 0 0 0 1655.08 150.36 Z" fill="#2b6cb3" stroke="#fff" stroke-width="0.9"/><path d="M1633.45 108.64 A35 35 0 0 1 1661.40 94.70 L1661.40 108.10 A21.6 21.6 0 0 0 1644.15 116.70 Z" fill="#1e8fff" stroke="#fff" stroke-width="0.9"/></svg>
<div class="b" style="left:1709.6px;top:101.9px;width:7.7px;height:7.3px;background:#0a6df0;"></div>
<div class="t" style="top:101.47px;font-size:8.3px;line-height:8.3px;color:#556b82;font-weight:bold;left:1721.7px;">Personal Equ...</div>
<div class="t" style="top:101.47px;font-size:8.3px;line-height:8.3px;color:#556b82;font-weight:bold;right:69.1px;text-align:right;">55.0%</div>
<div class="b" style="left:1709.6px;top:127.7px;width:7.7px;height:7.3px;background:#2b6cb3;"></div>
<div class="t" style="top:127.47px;font-size:8.3px;line-height:8.3px;color:#556b82;font-weight:bold;left:1721.7px;">Computer Sy...</div>
<div class="t" style="top:127.47px;font-size:8.3px;line-height:8.3px;color:#556b82;font-weight:bold;right:71.8px;text-align:right;">30.5%</div>
<div class="b" style="left:1709.6px;top:151.5px;width:7.7px;height:7.3px;background:#3d9cff;"></div>
<div class="t" style="top:151.47px;font-size:8.3px;line-height:8.3px;color:#556b82;font-weight:bold;left:1721.7px;">Other</div>
<div class="t" style="top:151.47px;font-size:8.3px;line-height:8.3px;color:#556b82;font-weight:bold;right:71.8px;text-align:right;">30.5%</div>
<div class="b" style="left:1420px;top:202.2px;width:132.2px;height:16.4px;background:#fff;border:1px solid #dfe3e7;border-radius:3px;box-sizing:border-box;box-shadow:inset 0 -1px 0 #8b9aab;"></div>
<div class="t" style="top:205.93px;font-size:8px;line-height:8px;color:#556b82;font-weight:normal;font-style:italic;left:1424.2px;">Search</div>
<svg class="b" style="left:1538.2px;top:205.8px" width="10" height="10" viewBox="0 0 10 10"><circle cx="4.2" cy="4.2" r="3.2" fill="none" stroke="#1d2d3e" stroke-width="1"/><path d="M6.5 6.5 L9 9" stroke="#1d2d3e" stroke-width="1.3" stroke-linecap="round"/></svg>
<div class="t" style="top:205.73px;font-size:8.35px;line-height:8.35px;color:#0064d9;font-weight:bold;left:1563px;">Create</div>
<div class="t" style="top:205.69px;font-size:8.4px;line-height:8.4px;color:#0064d9;font-weight:bold;left:1604.5px;">Delete</div>
<svg class="b" style="left:1645.5px;top:204.5px" width="9" height="11" viewBox="0 0 9 11"><path d="M2.4 1.8 H1.4 Q0.7 1.8 0.7 2.5 V9.6 Q0.7 10.3 1.4 10.3 H7.6 Q8.3 10.3 8.3 9.6 V2.5 Q8.3 1.8 7.6 1.8 H6.6" fill="none" stroke="#0064d9" stroke-width="0.9"/><rect x="2.6" y="0.6" width="3.8" height="2.1" rx="0.6" fill="none" stroke="#0064d9" stroke-width="0.9"/><path d="M4.5 4.6 V7.8 M3.5 5.4 H5.5 M3.5 7 H5.5" stroke="#0064d9" stroke-width="0.7"/></svg>
<div class="b" style="left:1664.2px;top:203px;width:1px;height:14px;background:#d9dde2;"></div>
<svg class="b" style="left:1674px;top:204.3px" width="11" height="11" viewBox="0 0 11 11"><path d="M3 10 V1 M0.8 3.2 L3 1 L5.2 3.2" fill="none" stroke="#0064d9" stroke-width="1"/><path d="M8 1.5 V10 M5.8 7.8 L8 10 L10.2 7.8" fill="none" stroke="#0064d9" stroke-width="1"/></svg>
<svg class="b" style="left:1698.7px;top:204.8px" width="10" height="10" viewBox="0 0 10 10"><path d="M0.7 1 H9.3 L6 5.2 V9.3 L4 8.3 V5.2 Z" fill="none" stroke="#0064d9" stroke-width="0.9" stroke-linejoin="round"/></svg>
<svg class="b" style="left:1722.5px;top:204.7px" width="11" height="10" viewBox="0 0 11 10"><path d="M2.2 1.2 H1 V8.8 H2.2 M8.8 1.2 H10 V8.8 H8.8" fill="none" stroke="#0064d9" stroke-width="0.8"/><path d="M3.6 3.2 H7.4 M3.6 5 H7.4 M3.6 6.8 H7.4" stroke="#0064d9" stroke-width="0.6"/></svg>
<svg class="b" style="left:1746.6px;top:204.3px" width="11" height="11" viewBox="0 0 11 11"><path d="M4.34 2.14 L4.72 1.07 L6.28 1.07 L6.66 2.14 L7.06 2.31 L8.08 1.81 L9.19 2.92 L8.69 3.94 L8.86 4.34 L9.93 4.72 L9.93 6.28 L8.86 6.66 L8.69 7.06 L9.19 8.08 L8.08 9.19 L7.06 8.69 L6.66 8.86 L6.28 9.93 L4.72 9.93 L4.34 8.86 L3.94 8.69 L2.92 9.19 L1.81 8.08 L2.31 7.06 L2.14 6.66 L1.07 6.28 L1.07 4.72 L2.14 4.34 L2.31 3.94 L1.81 2.92 L2.92 1.81 L3.94 2.31 Z" fill="none" stroke="#0064d9" stroke-width="0.9" stroke-linejoin="round"/><circle cx="5.5" cy="5.5" r="1.6" fill="none" stroke="#0064d9" stroke-width="0.9"/></svg>
<div class="b" style="left:1767px;top:203px;width:1px;height:14px;background:#d9dde2;"></div>
<svg class="b" style="left:1776.5px;top:204.3px" width="25" height="11" viewBox="0 0 25 11"><path d="M3.9 9.9 H1.4 Q0.9 9.9 0.9 9.4 V3.2 L3.3 0.7 H6.9 Q7.5 0.7 7.5 1.3 V3.2" fill="none" stroke="#0064d9" stroke-width="0.9" stroke-linejoin="round"/><path d="M0.9 3.3 L3.4 3.3 V0.8 Z" fill="#0064d9"/><rect x="4.4" y="3.5" width="6.3" height="4.8" rx="0.9" fill="none" stroke="#0064d9" stroke-width="0.9"/><path d="M6.5 3.6 V8.2 M8.6 3.6 V8.2 M4.5 5.9 H10.6" stroke="#0064d9" stroke-width="0.6"/><path d="M15.2 4.6 L18.7 7.9 L22.2 4.6" fill="none" stroke="#0064d9" stroke-width="0.9"/></svg>
<div class="b" style="left:1810.5px;top:203px;width:1px;height:14px;background:#d9dde2;"></div>
<div class="b" style="left:1411.5px;top:222.9px;width:404.1px;height:1px;background:#e5e8eb;"></div>
<div class="b" style="left:1411.5px;top:242px;width:404.1px;height:1px;background:#e5e8eb;"></div>
<div class="b" style="left:1420.5px;top:228.2px;width:10px;height:10px;background:#fff;border:1px solid #8b9bab;border-radius:2px;box-sizing:border-box;"></div>
<div class="t" style="top:228.97px;font-size:8.3px;line-height:8.3px;color:#1d2d3e;font-weight:bold;left:1440.4px;">Document Number</div>
<div class="t" style="top:228.97px;font-size:8.3px;line-height:8.3px;color:#1d2d3e;font-weight:bold;left:1530.7px;">Company</div>
<div class="t" style="top:228.97px;font-size:8.3px;line-height:8.3px;color:#1d2d3e;font-weight:bold;right:179px;text-align:right;">Posting Date</div>
<div class="t" style="top:228.97px;font-size:8.3px;line-height:8.3px;color:#1d2d3e;font-weight:bold;right:89px;text-align:right;">Amount</div>
<div class="b" style="left:1420.5px;top:247.4px;width:10px;height:10px;background:#fff;border:1px solid #8b9bab;border-radius:2px;box-sizing:border-box;"></div>
<div class="t" style="top:248.85px;font-size:8.45px;line-height:8.45px;color:#0064d9;font-weight:bold;left:1440.4px;">10223882001820</div>
<div class="t" style="top:248.97px;font-size:8.3px;line-height:8.3px;color:#1d2d3e;font-weight:bold;left:1530.7px;">Jologa</div>
<div class="t" style="top:248.97px;font-size:8.3px;line-height:8.3px;color:#1d2d3e;font-weight:bold;right:179px;text-align:right;">11/15</div>
<div class="t" style="top:248.97px;font-size:8.3px;line-height:8.3px;color:#1d2d3e;font-weight:bold;right:89px;text-align:right;">12,897.00</div>
<svg class="b" style="left:1803px;top:248.7px" width="6" height="8" viewBox="0 0 6 8"><path d="M0.8 0.6 L4.6 4 L0.8 7.4" fill="none" stroke="#4a6078" stroke-width="1.05"/></svg>
<div class="b" style="left:1411.5px;top:261.8px;width:404.1px;height:1px;background:#e9ecef;"></div>
<div class="b" style="left:1420.5px;top:266.84px;width:10px;height:10px;background:#fff;border:1px solid #8b9bab;border-radius:2px;box-sizing:border-box;"></div>
<div class="t" style="top:268.29px;font-size:8.45px;line-height:8.45px;color:#0064d9;font-weight:bold;left:1440.4px;">10223882002198</div>
<div class="t" style="top:268.41px;font-size:8.3px;line-height:8.3px;color:#1d2d3e;font-weight:bold;left:1530.7px;">Exotic Systems</div>
<div class="t" style="top:268.41px;font-size:8.3px;line-height:8.3px;color:#1d2d3e;font-weight:bold;right:179px;text-align:right;">11/18</div>
<div class="t" style="top:268.41px;font-size:8.3px;line-height:8.3px;color:#1d2d3e;font-weight:bold;right:89px;text-align:right;">12,897.00</div>
<svg class="b" style="left:1803px;top:268.14px" width="6" height="8" viewBox="0 0 6 8"><path d="M0.8 0.6 L4.6 4 L0.8 7.4" fill="none" stroke="#4a6078" stroke-width="1.05"/></svg>
<div class="b" style="left:1411.5px;top:281.24px;width:404.1px;height:1px;background:#e9ecef;"></div>
<div class="b" style="left:1420.5px;top:286.28px;width:10px;height:10px;background:#fff;border:1px solid #8b9bab;border-radius:2px;box-sizing:border-box;"></div>
<div class="t" style="top:287.73px;font-size:8.45px;line-height:8.45px;color:#0064d9;font-weight:bold;left:1440.4px;">21718318237193</div>
<div class="t" style="top:287.85px;font-size:8.3px;line-height:8.3px;color:#1d2d3e;font-weight:bold;left:1530.7px;">Lyngbysild</div>
<div class="t" style="top:287.85px;font-size:8.3px;line-height:8.3px;color:#1d2d3e;font-weight:bold;right:179px;text-align:right;">11/18</div>
<div class="t" style="top:287.85px;font-size:8.3px;line-height:8.3px;color:#1d2d3e;font-weight:bold;right:89px;text-align:right;">12,897.00</div>
<svg class="b" style="left:1803px;top:287.58px" width="6" height="8" viewBox="0 0 6 8"><path d="M0.8 0.6 L4.6 4 L0.8 7.4" fill="none" stroke="#4a6078" stroke-width="1.05"/></svg>
<div class="b" style="left:1411.5px;top:300.68px;width:404.1px;height:1px;background:#e9ecef;"></div>
<div class="b" style="left:1420.5px;top:305.72px;width:10px;height:10px;background:#fff;border:1px solid #8b9bab;border-radius:2px;box-sizing:border-box;"></div>
<div class="t" style="top:307.17px;font-size:8.45px;line-height:8.45px;color:#0064d9;font-weight:bold;left:1440.4px;">23797812373652</div>
<div class="t" style="top:307.29px;font-size:8.3px;line-height:8.3px;color:#1d2d3e;font-weight:bold;left:1530.7px;">DelBont Industries</div>
<div class="t" style="top:307.29px;font-size:8.3px;line-height:8.3px;color:#1d2d3e;font-weight:bold;right:179px;text-align:right;">11/18</div>
<div class="t" style="top:307.29px;font-size:8.3px;line-height:8.3px;color:#1d2d3e;font-weight:bold;right:89px;text-align:right;">12,897.00</div>
<svg class="b" style="left:1803px;top:307.02px" width="6" height="8" viewBox="0 0 6 8"><path d="M0.8 0.6 L4.6 4 L0.8 7.4" fill="none" stroke="#4a6078" stroke-width="1.05"/></svg>
<div class="b" style="left:1411.5px;top:320.12px;width:404.1px;height:1px;background:#e9ecef;"></div>
<div class="b" style="left:1420.5px;top:325.16px;width:10px;height:10px;background:#fff;border:1px solid #8b9bab;border-radius:2px;box-sizing:border-box;"></div>
<div class="t" style="top:326.61px;font-size:8.45px;line-height:8.45px;color:#0064d9;font-weight:bold;left:1440.4px;">24372738237827</div>
<div class="t" style="top:326.73px;font-size:8.3px;line-height:8.3px;color:#1d2d3e;font-weight:bold;left:1530.7px;">Jologa</div>
<div class="t" style="top:326.73px;font-size:8.3px;line-height:8.3px;color:#1d2d3e;font-weight:bold;right:179px;text-align:right;">11/23</div>
<div class="t" style="top:326.73px;font-size:8.3px;line-height:8.3px;color:#1d2d3e;font-weight:bold;right:89px;text-align:right;">12,897.00</div>
<svg class="b" style="left:1803px;top:326.46px" width="6" height="8" viewBox="0 0 6 8"><path d="M0.8 0.6 L4.6 4 L0.8 7.4" fill="none" stroke="#4a6078" stroke-width="1.05"/></svg>
<div class="b" style="left:1411.5px;top:339.56px;width:404.1px;height:1px;background:#e9ecef;"></div>
<div class="b" style="left:1420.5px;top:344.6px;width:10px;height:10px;background:#fff;border:1px solid #8b9bab;border-radius:2px;box-sizing:border-box;"></div>
<div class="t" style="top:346.05px;font-size:8.45px;line-height:8.45px;color:#0064d9;font-weight:bold;left:1440.4px;">25717388235263</div>
<div class="t" style="top:346.17px;font-size:8.3px;line-height:8.3px;color:#1d2d3e;font-weight:bold;left:1530.7px;">Exotic Systems</div>
<div class="t" style="top:346.17px;font-size:8.3px;line-height:8.3px;color:#1d2d3e;font-weight:bold;right:179px;text-align:right;">11/25</div>
<div class="t" style="top:346.17px;font-size:8.3px;line-height:8.3px;color:#1d2d3e;font-weight:bold;right:89px;text-align:right;">12,897.00</div>
<svg class="b" style="left:1803px;top:345.9px" width="6" height="8" viewBox="0 0 6 8"><path d="M0.8 0.6 L4.6 4 L0.8 7.4" fill="none" stroke="#4a6078" stroke-width="1.05"/></svg>
<div class="b" style="left:1411.5px;top:359px;width:404.1px;height:1px;background:#e9ecef;"></div>
<div class="b" style="left:1420.5px;top:364.04px;width:10px;height:10px;background:#fff;border:1px solid #8b9bab;border-radius:2px;box-sizing:border-box;"></div>
<div class="t" style="top:365.49px;font-size:8.45px;line-height:8.45px;color:#0064d9;font-weight:bold;left:1440.4px;">25738726535211</div>
<div class="t" style="top:365.61px;font-size:8.3px;line-height:8.3px;color:#1d2d3e;font-weight:bold;left:1530.7px;">DelBont Industries</div>
<div class="t" style="top:365.61px;font-size:8.3px;line-height:8.3px;color:#1d2d3e;font-weight:bold;right:179px;text-align:right;">11/28</div>
<div class="t" style="top:365.61px;font-size:8.3px;line-height:8.3px;color:#1d2d3e;font-weight:bold;right:89px;text-align:right;">12,897.00</div>
<svg class="b" style="left:1803px;top:365.34px" width="6" height="8" viewBox="0 0 6 8"><path d="M0.8 0.6 L4.6 4 L0.8 7.4" fill="none" stroke="#4a6078" stroke-width="1.05"/></svg>
<div class="b" style="left:1411.5px;top:378.44px;width:404.1px;height:1px;background:#e9ecef;"></div>
<div class="b" style="left:1420.5px;top:383.48px;width:10px;height:10px;background:#fff;border:1px solid #8b9bab;border-radius:2px;box-sizing:border-box;"></div>
<div class="t" style="top:384.93px;font-size:8.45px;line-height:8.45px;color:#0064d9;font-weight:bold;left:1440.4px;">28363669229821</div>
<div class="t" style="top:385.05px;font-size:8.3px;line-height:8.3px;color:#1d2d3e;font-weight:bold;left:1530.7px;">Jologa</div>
<div class="t" style="top:385.05px;font-size:8.3px;line-height:8.3px;color:#1d2d3e;font-weight:bold;right:179px;text-align:right;">12/01</div>
<div class="t" style="top:385.05px;font-size:8.3px;line-height:8.3px;color:#1d2d3e;font-weight:bold;right:89px;text-align:right;">12,897.00</div>
<svg class="b" style="left:1803px;top:384.78px" width="6" height="8" viewBox="0 0 6 8"><path d="M0.8 0.6 L4.6 4 L0.8 7.4" fill="none" stroke="#4a6078" stroke-width="1.05"/></svg>
<div class="b" style="left:1411.5px;top:397.88px;width:404.1px;height:1px;background:#e9ecef;"></div>
<div class="b" style="left:1420.5px;top:402.92px;width:10px;height:10px;background:#fff;border:1px solid #8b9bab;border-radius:2px;box-sizing:border-box;"></div>
<div class="t" style="top:404.37px;font-size:8.45px;line-height:8.45px;color:#0064d9;font-weight:bold;left:1440.4px;">30818377389129</div>
<div class="t" style="top:404.49px;font-size:8.3px;line-height:8.3px;color:#1d2d3e;font-weight:bold;left:1530.7px;">DelBont Industries</div>
<div class="t" style="top:404.49px;font-size:8.3px;line-height:8.3px;color:#1d2d3e;font-weight:bold;right:179px;text-align:right;">12/08</div>
<div class="t" style="top:404.49px;font-size:8.3px;line-height:8.3px;color:#1d2d3e;font-weight:bold;right:89px;text-align:right;">12,897.00</div>
<svg class="b" style="left:1803px;top:404.22px" width="6" height="8" viewBox="0 0 6 8"><path d="M0.8 0.6 L4.6 4 L0.8 7.4" fill="none" stroke="#4a6078" stroke-width="1.05"/></svg>
<div class="b" style="left:1411.5px;top:417.32px;width:404.1px;height:1px;background:#e9ecef;"></div>
<div class="b" style="left:1420.5px;top:422.36px;width:10px;height:10px;background:#fff;border:1px solid #8b9bab;border-radius:2px;box-sizing:border-box;"></div>
<div class="t" style="top:423.81px;font-size:8.45px;line-height:8.45px;color:#0064d9;font-weight:bold;left:1440.4px;">33030203939291</div>
<div class="t" style="top:423.93px;font-size:8.3px;line-height:8.3px;color:#1d2d3e;font-weight:bold;left:1530.7px;">Exotic Systems</div>
<div class="t" style="top:423.93px;font-size:8.3px;line-height:8.3px;color:#1d2d3e;font-weight:bold;right:179px;text-align:right;">12/12</div>
<div class="t" style="top:423.93px;font-size:8.3px;line-height:8.3px;color:#1d2d3e;font-weight:bold;right:89px;text-align:right;">12,897.00</div>
<svg class="b" style="left:1803px;top:423.66px" width="6" height="8" viewBox="0 0 6 8"><path d="M0.8 0.6 L4.6 4 L0.8 7.4" fill="none" stroke="#4a6078" stroke-width="1.05"/></svg>
<div class="b" style="left:1411.5px;top:436.76px;width:404.1px;height:1px;background:#e9ecef;"></div>
<div class="b" style="left:1420.5px;top:441.8px;width:10px;height:10px;background:#fff;border:1px solid #8b9bab;border-radius:2px;box-sizing:border-box;"></div>
<div class="t" style="top:443.25px;font-size:8.45px;line-height:8.45px;color:#0064d9;font-weight:bold;left:1440.4px;">33030203939292</div>
<div class="t" style="top:443.37px;font-size:8.3px;line-height:8.3px;color:#1d2d3e;font-weight:bold;left:1530.7px;">DelBont Industries</div>
<div class="t" style="top:443.37px;font-size:8.3px;line-height:8.3px;color:#1d2d3e;font-weight:bold;right:179px;text-align:right;">12/12</div>
<div class="t" style="top:443.37px;font-size:8.3px;line-height:8.3px;color:#1d2d3e;font-weight:bold;right:89px;text-align:right;">12,897.00</div>
<svg class="b" style="left:1803px;top:443.1px" width="6" height="8" viewBox="0 0 6 8"><path d="M0.8 0.6 L4.6 4 L0.8 7.4" fill="none" stroke="#4a6078" stroke-width="1.05"/></svg>
<div class="b" style="left:1411.5px;top:456.2px;width:404.1px;height:1px;background:#e9ecef;"></div>
<div class="b" style="left:1420.5px;top:461.24px;width:10px;height:10px;background:#fff;border:1px solid #8b9bab;border-radius:2px;box-sizing:border-box;"></div>
<div class="t" style="top:462.69px;font-size:8.45px;line-height:8.45px;color:#0064d9;font-weight:bold;left:1440.4px;">33032912883121</div>
<div class="t" style="top:462.81px;font-size:8.3px;line-height:8.3px;color:#1d2d3e;font-weight:bold;left:1530.7px;">DelBont Industries</div>
<div class="t" style="top:462.81px;font-size:8.3px;line-height:8.3px;color:#1d2d3e;font-weight:bold;right:179px;text-align:right;">12/13</div>
<div class="t" style="top:462.81px;font-size:8.3px;line-height:8.3px;color:#1d2d3e;font-weight:bold;right:89px;text-align:right;">12,897.00</div>
<svg class="b" style="left:1803px;top:462.54px" width="6" height="8" viewBox="0 0 6 8"><path d="M0.8 0.6 L4.6 4 L0.8 7.4" fill="none" stroke="#4a6078" stroke-width="1.05"/></svg>
<div class="b" style="left:1411.5px;top:475.64px;width:404.1px;height:1px;background:#e9ecef;"></div>
<div class="b" style="left:1420.5px;top:480.68px;width:10px;height:10px;background:#fff;border:1px solid #8b9bab;border-radius:2px;box-sizing:border-box;"></div>
<div class="t" style="top:482.13px;font-size:8.45px;line-height:8.45px;color:#0064d9;font-weight:bold;left:1440.4px;">34021027182991</div>
<div class="t" style="top:482.25px;font-size:8.3px;line-height:8.3px;color:#1d2d3e;font-weight:bold;left:1530.7px;">Lyna Systems</div>
<div class="t" style="top:482.25px;font-size:8.3px;line-height:8.3px;color:#1d2d3e;font-weight:bold;right:179px;text-align:right;">12/15</div>
<div class="t" style="top:482.25px;font-size:8.3px;line-height:8.3px;color:#1d2d3e;font-weight:bold;right:89px;text-align:right;">12,897.00</div>
<svg class="b" style="left:1803px;top:481.98px" width="6" height="8" viewBox="0 0 6 8"><path d="M0.8 0.6 L4.6 4 L0.8 7.4" fill="none" stroke="#4a6078" stroke-width="1.05"/></svg>
<div class="b" style="left:976.3px;top:352.5px;width:416.7px;height:146.3px;background:#fff;border:1px solid #e4e7ea;border-radius:9px;box-sizing:border-box;box-shadow:0 1px 2px rgba(34,53,72,0.12);background:#fff;"></div>
<div class="t" style="top:363.77px;font-size:8.3px;line-height:8.3px;color:#1d2d3e;font-weight:bold;left:986.8px;">Spend Inflows and Outflows</div>
<div class="t" style="top:363.15px;font-size:7.5px;line-height:7.5px;color:#556b82;font-weight:normal;right:497.5px;text-align:right;">6 of 23</div>
<div class="b" style="left:977.3px;top:380.8px;width:413.8px;height:1px;background:#eceef0;"></div>
<div class="t" style="top:387.97px;font-size:8.3px;line-height:8.3px;color:#1d2d3e;font-weight:bold;left:986.8px;">Supplier</div>
<div class="t" style="top:387.97px;font-size:8.3px;line-height:8.3px;color:#1d2d3e;font-weight:bold;right:706.5px;text-align:right;">Date</div>
<div class="t" style="top:387.97px;font-size:8.3px;line-height:8.3px;color:#1d2d3e;font-weight:bold;right:607.9px;text-align:right;">Amount</div>
<div class="b" style="left:977.3px;top:400.7px;width:304.4px;height:1px;background:#e5e8eb;"></div>
<div class="t" style="top:407.37px;font-size:8.3px;line-height:8.3px;color:#1d2d3e;font-weight:bold;left:986.8px;">Jologa</div>
<div class="t" style="top:407.37px;font-size:8.3px;line-height:8.3px;color:#1d2d3e;font-weight:bold;right:706.5px;text-align:right;">Jul 15</div>
<div class="t" style="top:407.37px;font-size:8.3px;line-height:8.3px;color:#aa0808;font-weight:bold;right:611.1px;text-align:right;">59K</div>
<div class="t" style="top:426.77px;font-size:8.3px;line-height:8.3px;color:#1d2d3e;font-weight:bold;left:986.8px;">Florida Company</div>
<div class="t" style="top:426.77px;font-size:8.3px;line-height:8.3px;color:#1d2d3e;font-weight:bold;right:706.5px;text-align:right;">Jul 15</div>
<div class="t" style="top:426.77px;font-size:8.3px;line-height:8.3px;color:#c35500;font-weight:bold;right:611.1px;text-align:right;">32K</div>
<div class="t" style="top:446.17px;font-size:8.3px;line-height:8.3px;color:#1d2d3e;font-weight:bold;left:986.8px;">PC Gym Tec</div>
<div class="t" style="top:446.17px;font-size:8.3px;line-height:8.3px;color:#1d2d3e;font-weight:bold;right:706.5px;text-align:right;">Jul 13</div>
<div class="t" style="top:446.17px;font-size:8.3px;line-height:8.3px;color:#256f3a;font-weight:bold;right:611.1px;text-align:right;">7K</div>
<div class="t" style="top:465.57px;font-size:8.3px;line-height:8.3px;color:#1d2d3e;font-weight:bold;left:986.8px;">DelBont Inc.</div>
<div class="t" style="top:465.57px;font-size:8.3px;line-height:8.3px;color:#1d2d3e;font-weight:bold;right:706.5px;text-align:right;">Jul 12</div>
<div class="t" style="top:465.57px;font-size:8.3px;line-height:8.3px;color:#256f3a;font-weight:bold;right:611.1px;text-align:right;">20K</div>
</body></html>
